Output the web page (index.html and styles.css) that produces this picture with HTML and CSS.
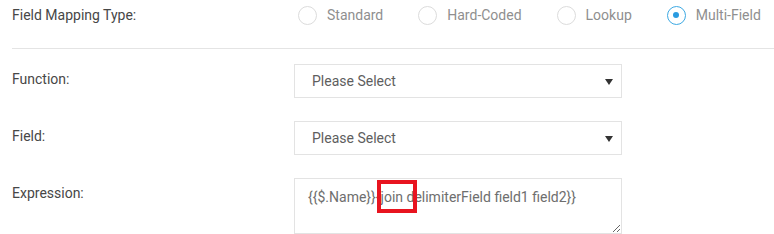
FILE: index.html
```html
<!DOCTYPE html>
<html lang="en">
<head>
  <meta charset="UTF-8">
  <title>Field Mapping</title>
  <link rel="stylesheet" href="styles.css">
</head>
<body>
  <div class="mapping">
    <div class="row row-type">
      <label class="label">Field Mapping Type:</label>
      <div class="radios">
        <label class="radio"><span class="dot"></span>Standard</label>
        <label class="radio"><span class="dot"></span>Hard-Coded</label>
        <label class="radio"><span class="dot"></span>Lookup</label>
        <label class="radio checked"><span class="dot"></span>Multi-Field</label>
      </div>
    </div>

    <div class="row">
      <label class="label">Function:</label>
      <div class="select-wrap">
        <select><option>Please Select</option></select>
      </div>
    </div>

    <div class="row">
      <label class="label">Field:</label>
      <div class="select-wrap">
        <select><option>Please Select</option></select>
      </div>
    </div>

    <div class="row last">
      <label class="label">Expression:</label>
      <div class="expr-wrap">
        <textarea>{{$.Name}}{join delimiterField field1 field2}}</textarea>
        <div class="highlight"></div>
      </div>
    </div>
  </div>
</body>
</html>
```

FILE: styles.css
```css
* { box-sizing: border-box; }
body {
  margin: 0;
  font-family: Roboto, "Liberation Sans", Arial, sans-serif;
  font-size: 14px;
  color: #444;
  background: #fff;
}
.mapping { padding-left: 12px; }
.row {
  display: grid;
  grid-template-columns: 282px 328px;
  margin-bottom: 23px;
}
.row.last { margin-bottom: 0; }
.label { padding-top: 6px; line-height: 18px; color: #474747; }

.row-type {
  height: 49px;
  align-items: center;
  padding-bottom: 18px;
  border-bottom: 1px solid #e4e4e4;
  margin-bottom: 15px;
}
.row-type .label { padding-top: 0; }
.radios { display: flex; gap: 35px; margin-left: 4px; white-space: nowrap; }
.radio { display: flex; align-items: center; gap: 10px; color: #8f8f8f; }
.dot {
  width: 19px; height: 19px;
  border: 1px solid #dcdcdc; border-radius: 50%;
  display: flex; justify-content: center; align-items: center;
}
.checked .dot { border-color: #3da9e3; }
.checked .dot::after {
  content: ""; width: 6px; height: 6px; border-radius: 50%; background: #2a9be0;
}

.select-wrap { position: relative; }
select {
  appearance: none; -webkit-appearance: none;
  width: 328px; height: 34px;
  padding: 0 30px 0 17px;
  font: inherit; color: #5e5e5e;
  background: #fff;
  border: 1px solid #e3e3e3; border-radius: 0;
}
.select-wrap::after {
  content: "";
  position: absolute; right: 9px; top: 15px;
  border-left: 4px solid transparent; border-right: 4px solid transparent;
  border-top: 6px solid #333;
  pointer-events: none;
}

.expr-wrap { position: relative; }
textarea {
  display: block;
  width: 328px; height: 56px;
  padding: 9px 13px;
  font: inherit; color: #6e6e6e; line-height: 18px;
  border: 1px solid #e3e3e3; border-radius: 0;
  resize: both;
}
.highlight {
  position: absolute; left: 83px; top: 2px;
  width: 40px; height: 33px;
  border: 4px solid #e8141f;
}
```
